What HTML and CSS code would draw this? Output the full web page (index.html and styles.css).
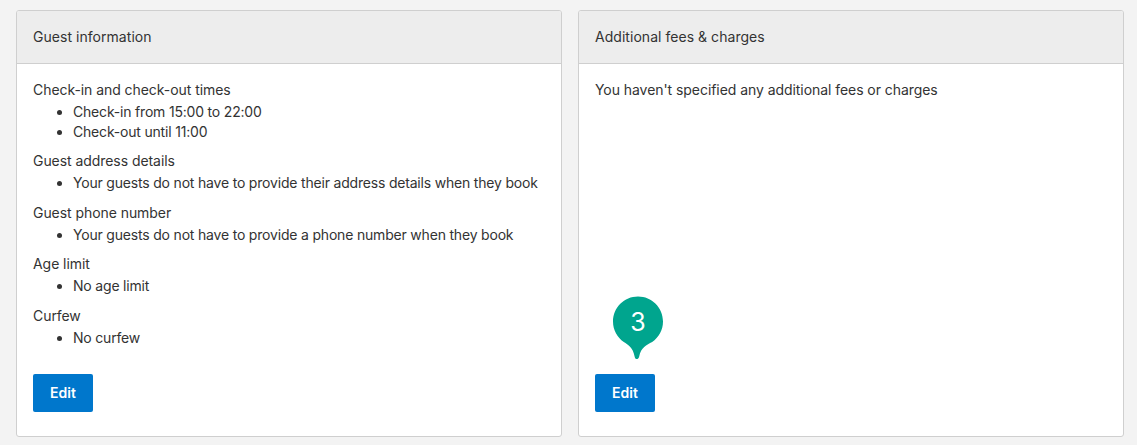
FILE: index.html
```html
<!DOCTYPE html>
<html lang="en">
<head>
<meta charset="utf-8">
<title>Policies</title>
<link rel="stylesheet" href="styles.css">
</head>
<body>
<main class="grid">
  <section class="card">
    <h2 class="card-head">Guest information</h2>
    <div class="card-body">
      <div class="groups">
        <div class="group">
          <p class="label">Check-in and check-out times</p>
          <ul class="list"><li>Check-in from 15:00 to 22:00</li><li>Check-out until 11:00</li></ul>
        </div>
        <div class="group">
          <p class="label">Guest address details</p>
          <ul class="list"><li>Your guests do not have to provide their address details when they book</li></ul>
        </div>
        <div class="group">
          <p class="label">Guest phone number</p>
          <ul class="list"><li>Your guests do not have to provide a phone number when they book</li></ul>
        </div>
        <div class="group">
          <p class="label">Age limit</p>
          <ul class="list"><li>No age limit</li></ul>
        </div>
        <div class="group">
          <p class="label">Curfew</p>
          <ul class="list"><li>No curfew</li></ul>
        </div>
      </div>
      <a class="btn" href="#">Edit</a>
    </div>
  </section>
  <section class="card">
    <h2 class="card-head">Additional fees &amp; charges</h2>
    <div class="card-body">
      <div class="groups">
        <p class="label">You haven't specified any additional fees or charges</p>
      </div>
      <div class="btn-wrap">
        <svg class="pin" width="50" height="63" viewBox="0 0 50 63" aria-hidden="true"><path class="pin-shape" d="M25 0.500C11.200 0.500 0 11.700 0 25.500c0 8.500 4.300 16 10.800 20.500 4.400 3 9.200 5.500 10.800 14.500.5 2.600 1.300 2.500 2.200 2.500s1.900-.2 2.400-2.500c1.700-9 7.400-11.500 13-14.500C45.700 41.500 50 34 50 25.500 50 11.700 38.800 0.500 25 0.500z"/></svg>
        <span class="pin-num">3</span>
        <a class="btn" href="#">Edit</a>
      </div>
    </div>
  </section>
</main>
</body>
</html>
```
FILE: styles.css
```css
* { box-sizing: border-box; }
html, body { margin: 0; height: 100%; }
body {
  background: #f3f3f3;
  font-family: "Inter", "Liberation Sans", sans-serif;
  color: #333;
  font-size: 14px;
  line-height: 20px;
}
.grid {
  display: grid;
  grid-template-columns: 546px 546px;
  gap: 16px;
  padding: 10px 0 0 16px;
  height: 437px;
}
.card {
  background: #fff;
  border: 1px solid #cfcfcf;
  border-radius: 3px;
  display: flex;
  flex-direction: column;
  overflow: hidden;
}
.card-head {
  margin: 0;
  height: 53px;
  padding: 16px;
  background: #ededed;
  border-bottom: 1px solid #cfcfcf;
  font-size: 14px;
  font-weight: 400;
  line-height: 20px;
  letter-spacing: 0.04px;
}
.card-body {
  flex: 1;
  padding: 16px 16px 24px;
  display: flex;
  flex-direction: column;
  justify-content: space-between;
  align-items: flex-start;
}
.groups { display: flex; flex-direction: column; gap: 9.4px; }
.label { margin: 0; letter-spacing: -0.06px; }
.list { margin: 2px 0 0; padding: 0 0 0 40px; letter-spacing: -0.19px; }
.list li { height: 20px; }
.btn {
  display: flex;
  align-items: center;
  justify-content: center;
  width: 60px;
  height: 38px;
  background: #0077cc;
  color: #fff;
  border-radius: 2px;
  font-weight: 600;
  text-decoration: none;
}
.btn-wrap { position: relative; }
.pin { position: absolute; left: 18px; top: -78px; }
.pin-shape { fill: #00a58e; }
.pin-num {
  position: absolute;
  left: 18px;
  top: -78px;
  width: 50px;
  height: 50px;
  padding-top: 2px;
  display: flex;
  align-items: center;
  justify-content: center;
  color: #fff;
  font-size: 25px;
  font-weight: 400;
}
```
